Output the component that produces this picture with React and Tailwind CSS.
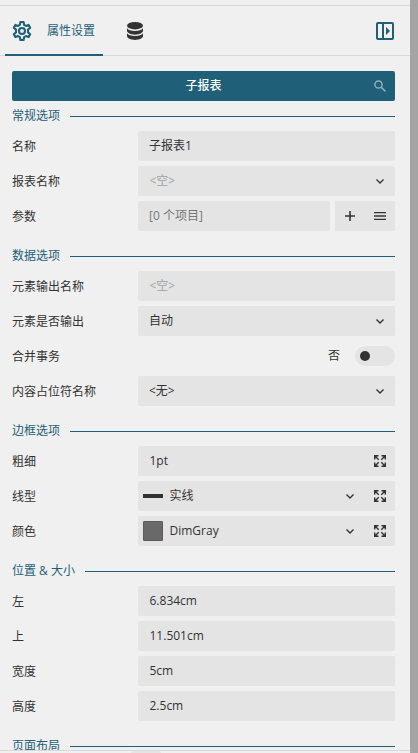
import React from "react";

const Chevron = () => (
  <span className="flex w-[30px] shrink-0 justify-center">
    <svg width="8" height="5" viewBox="0 0 8 5" fill="none" stroke="#333" strokeWidth="1.4">
      <path d="M.5.5 4 3.900 7.500.5" />
    </svg>
  </span>
);

const Expand = () => (
  <svg width="12" height="12" viewBox="0 0 12 12" fill="none" stroke="#333" strokeWidth="1.4">
    <path d="M.7 4.5V.7H4.5M.8.8 4.7 4.7M7.5.7h3.8v3.8M11.2.8 7.3 4.7M.7 7.5v3.8h3.8M.8 11.2 4.7 7.3M7.5 11.3h3.8V7.5M11.2 11.2 7.3 7.3" />
  </svg>
);

const Gear = () => (
  <svg width="20" height="20" viewBox="0 0 20 20" fill="none" stroke="#1f5f78" strokeWidth="2.1" strokeLinejoin="round">
    <path d="M8.400 1.050h3.200l.5 2.800 1.800 1.050 2.700-1 1.600 2.800-2.200 1.900v2.800l2.200 1.900-1.600 2.800-2.700-1-1.800 1.050-.5 2.800H8.400l-.5-2.800-1.800-1.050-2.700 1-1.600-2.800L4 11.400V8.600L1.800 6.700l1.600-2.800 2.700 1 1.800-1.050z" />
    <circle cx="10" cy="10" r="3" />
  </svg>
);

const Database = () => (
  <svg width="16" height="18" viewBox="0 0 16 18" fill="#333">
    <ellipse cx="8" cy="3.7" rx="8" ry="3.7" />
    <path d="M0 6.2c1.2 1.8 4.2 2.7 8 2.7s6.8-.9 8-2.7v2.6c0 2-3.6 3.9-8 3.9S0 10.800 0 8.800z" />
    <path d="M0 11.300c1.200 1.800 4.200 2.800 8 2.800s6.800-1 8-2.800v2.800C16 16.200 12.400 18 8 18s-8-1.800-8-3.900z" />
  </svg>
);

const PanelIcon = () => (
  <svg width="18" height="18" viewBox="0 0 18 18" fill="none" stroke="#1f5f78" strokeWidth="2">
    <rect x="1" y="1" width="16" height="16" rx="1" />
    <path d="M7 1v16" />
    <path d="M10 5v8l4-4z" fill="#1f5f78" stroke="none" />
  </svg>
);

const Heading = ({ children }) => (
  <div className="flex h-[30px] shrink-0 items-center pt-[11px] text-[#1f5f78]">
    <span className="-mt-0.5 leading-4">{children}</span>
    <span className="ml-[10px] h-px flex-1 bg-[#1f5f78]" />
  </div>
);

const Row = ({ label, children }) => (
  <div className="flex h-[30px] shrink-0 items-center">
    <span className="w-[126px] shrink-0 pt-0.5 leading-4">{label}</span>
    {children}
  </div>
);

const Field = ({ children, muted, latin, chevron, expand }) => (
  <div className="flex h-[30px] min-w-0 flex-1 items-center rounded-[2px] bg-[#e4e4e4]">
    <span className={"flex-1 pb-px leading-4 " + (latin ? "pl-[11.5px] " : "pl-[11px] ") + (muted || "")}>{children}</span>
    {chevron && <Chevron />}
    {expand && <span className="flex w-[30px] justify-center"><Expand /></span>}
  </div>
);

const Picker = ({ sample, children }) => (
  <div className="flex h-[30px] flex-1 items-center rounded-[2px] bg-[#e4e4e4] pl-[5px]">
    {sample}
    <span className="flex-1 pb-px pl-[6.5px] leading-4">{children}</span>
    <Chevron />
    <span className="flex w-[30px] justify-center"><Expand /></span>
  </div>
);

export default function App() {
  return (
    <div className="flex h-[753px] w-[418px] overflow-hidden bg-[#f0f0f0] text-[12px] text-[#333] [font-family:'Open_Sans','Noto_Sans_CJK_SC',sans-serif]">
      <div className="flex w-[410px] flex-col">
        <div className="h-[6px] shrink-0 border-b border-[#d9d9d9]" />
        <header className="flex h-[50px] shrink-0 border-b border-[#d9d9d9] pl-[5px] pr-4">
          <div className="-mb-px flex h-[50px] w-[98px] items-center border-b-2 border-[#1f5f78] pl-[7px] pt-[2px] text-[#1f5f78]">
            <Gear />
            <span className="ml-[15px] leading-4">属性设置</span>
          </div>
          <div className="ml-6 flex items-center pt-px">
            <Database />
          </div>
          <div className="ml-auto flex items-center pt-px">
            <PanelIcon />
          </div>
        </header>
        <main className="flex min-h-0 flex-1 flex-col overflow-hidden pl-3 pr-[15px] pt-[15px]">
          <div className="flex h-[30px] shrink-0 items-center rounded-[2px] bg-[#1f5f78] text-white">
            <span className="w-[30px]" />
            <span className="flex-1 pb-px text-center font-medium leading-4">子报表</span>
            <span className="flex w-[30px] justify-center">
              <svg width="12" height="12" viewBox="0 0 12 12" fill="none" stroke="#8fafbc" strokeWidth="1.5">
                <circle cx="4.500" cy="4.500" r="3.600" />
                <path d="m7.200 7.200 4.200 4.200" />
              </svg>
            </span>
          </div>
          <div className="-mt-[5px] flex flex-col gap-[5px]">
            <Heading>常规选项</Heading>
            <Row label="名称"><Field>子报表1</Field></Row>
            <Row label="报表名称"><Field muted="text-[#a3a3a3]" chevron latin>&lt;空&gt;</Field></Row>
            <Row label="参数">
              <Field muted="text-[#777]">[0 个项目]</Field>
              <div className="ml-[5px] flex h-[30px] w-[60px] items-center rounded-[2px] bg-[#e4e4e4]">
                <span className="flex w-[30px] justify-center">
                  <svg width="10" height="10" viewBox="0 0 10 10" stroke="#333" strokeWidth="1.600"><path d="M5 0v10M0 5h10" /></svg>
                </span>
                <span className="flex w-[30px] justify-center">
                  <svg width="12" height="8" viewBox="0 0 12 8" stroke="#333" strokeWidth="1.300"><path d="M0 .65h12M0 4h12M0 7.350h12" /></svg>
                </span>
              </div>
            </Row>
            <Heading>数据选项</Heading>
            <Row label="元素输出名称"><Field muted="text-[#a3a3a3]" latin>&lt;空&gt;</Field></Row>
            <Row label="元素是否输出"><Field chevron>自动</Field></Row>
            <Row label="合并事务">
              <div className="flex flex-1 items-center justify-end">
                <span className="mr-[15px] pb-px leading-4">否</span>
                <span className="flex h-5 w-10 items-center rounded-full bg-[#e4e4e4] pl-[5px]">
                  <span className="size-[10px] rounded-full bg-[#333]" />
                </span>
              </div>
            </Row>
            <Row label="内容占位符名称"><Field chevron>&lt;无&gt;</Field></Row>
            <Heading>边框选项</Heading>
            <Row label="粗细"><Field expand latin>1pt</Field></Row>
            <Row label="线型"><Picker sample={<span className="h-1 w-5 bg-[#333]" />}>实线</Picker></Row>
            <Row label="颜色"><Picker sample={<span className="size-5 rounded-[1px] border border-[#5b5b5b] bg-[#696969]" />}>DimGray</Picker></Row>
            <Heading>位置 &amp; 大小</Heading>
            <Row label="左"><Field latin>6.834cm</Field></Row>
            <Row label="上"><Field latin>11.501cm</Field></Row>
            <Row label="宽度"><Field latin>5cm</Field></Row>
            <Row label="高度"><Field latin>2.5cm</Field></Row>
            <Heading>页面布局</Heading>
          </div>
        </main>
        <footer className="h-[3px] shrink-0 border-t border-[#d9d9d9]">
          <div className="ml-[131px] h-[2px] w-[30px] rounded-t-[2px] bg-[#e4e4e4]" />
        </footer>
      </div>
      <div className="flex-1 bg-[#a4a4a4]" />
    </div>
  );
}
